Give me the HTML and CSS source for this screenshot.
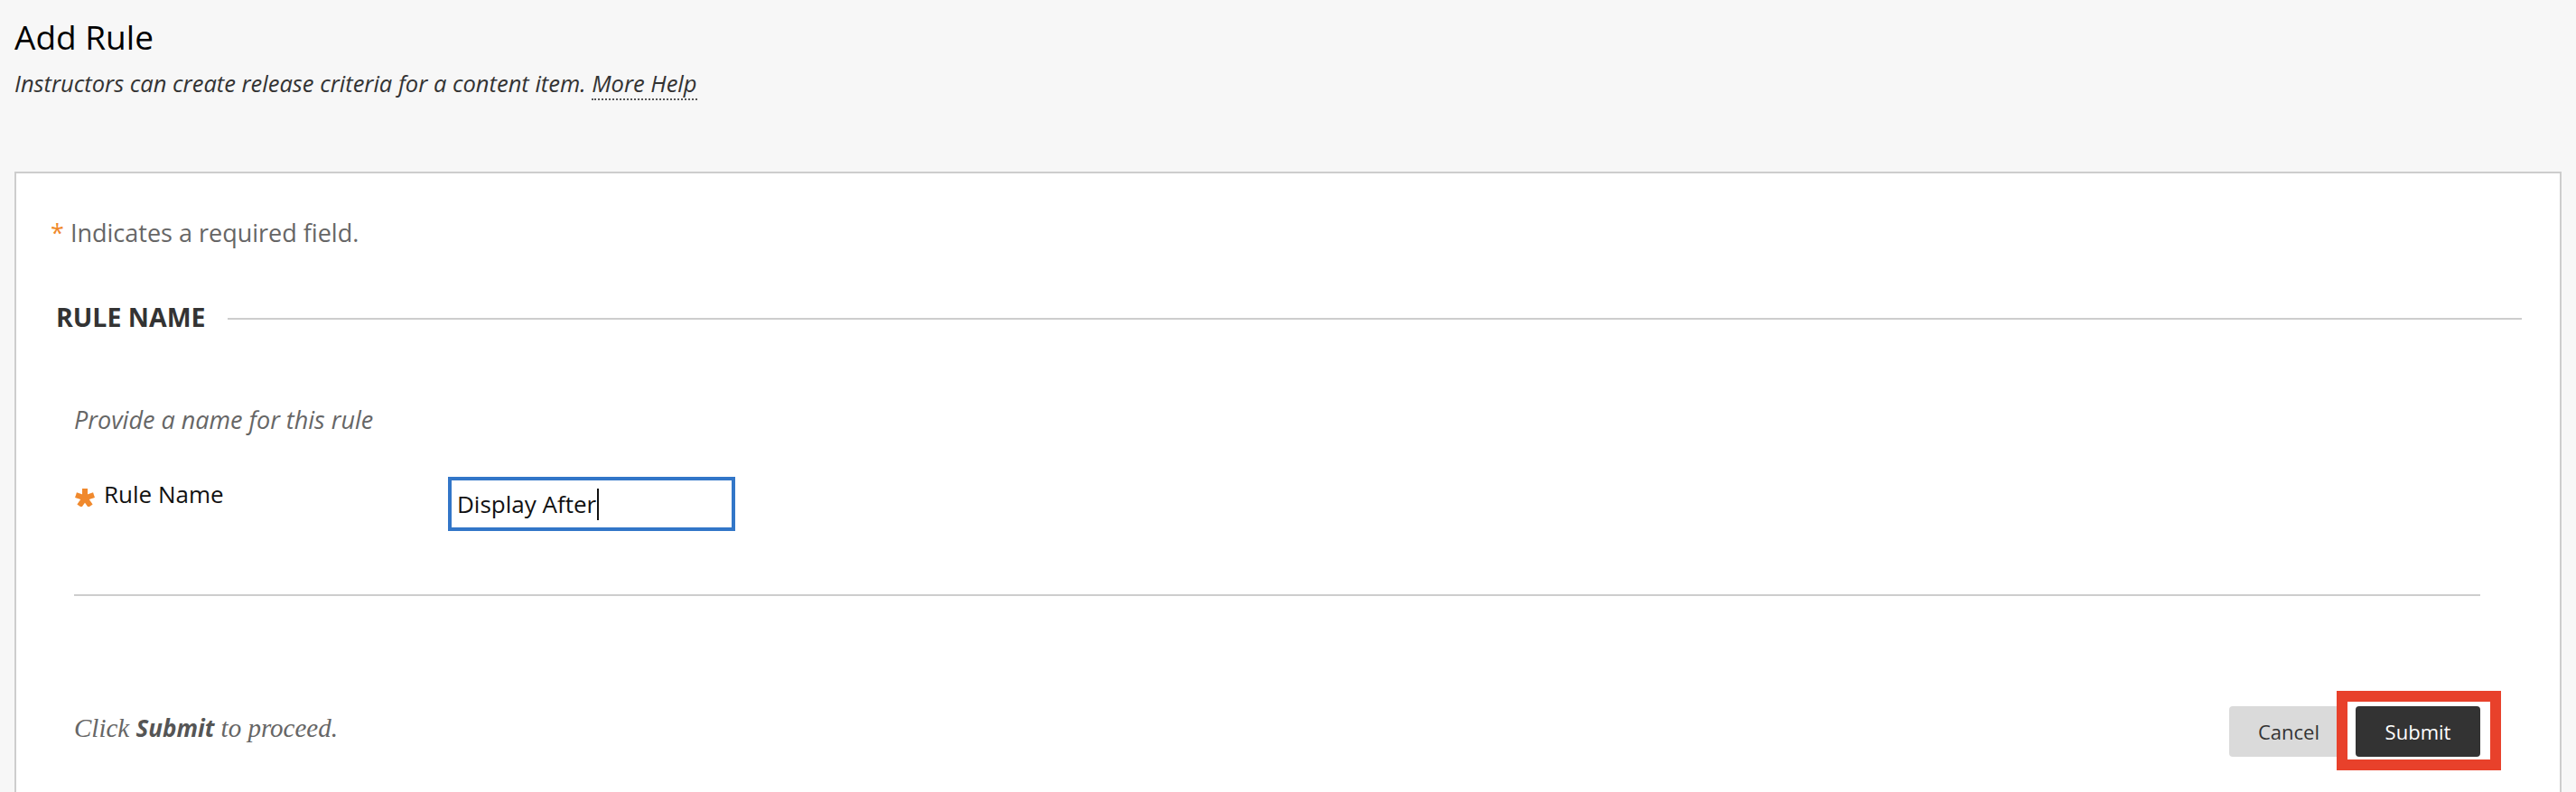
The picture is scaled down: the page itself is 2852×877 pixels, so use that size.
FILE: index.html
```html
<!DOCTYPE html>
<html lang="en">
<head>
<meta charset="utf-8">
<title>Add Rule</title>
<link rel="stylesheet" href="styles.css">
</head>
<body>
<div class="page">
  <header class="page-header">
    <h1 class="title">Add Rule</h1>
    <p class="subtitle">Instructors can create release criteria for a content item. <a class="help" href="#">More Help</a></p>
  </header>

  <div class="card">
    <p class="required"><span class="req-star">*</span> Indicates a required field.</p>

    <section class="step">
      <div class="step-head">
        <h2 class="step-title">RULE NAME</h2>
        <span class="step-line"></span>
      </div>
      <div class="step-body">
        <p class="instructions">Provide a name for this rule</p>
        <div class="field-row">
          <div class="label">
            <svg class="big-star" width="22" height="20" viewBox="0 0 22 20" aria-hidden="true">
              <g stroke="#f0892d" stroke-width="6" stroke-linecap="butt">
                <line x1="11" y1="10.5" x2="11" y2="0"/>
                <line x1="11" y1="10.5" x2="21" y2="7.2"/>
                <line x1="11" y1="10.5" x2="1" y2="7.2"/>
                <line x1="11" y1="10.5" x2="17.2" y2="19.2"/>
                <line x1="11" y1="10.5" x2="4.8" y2="19.2"/>
              </g>
            </svg>
            <span class="label-text">Rule Name</span>
          </div>
          <div class="text-input">Display After<span class="caret"></span></div>
        </div>
      </div>
    </section>

    <div class="submit-row">
      <p class="submit-hint">Click <strong>Submit</strong> to proceed.</p>
      <div class="buttons">
        <button class="btn btn-cancel" type="button">Cancel</button>
        <span class="submit-wrap">
          <button class="btn btn-submit" type="button">Submit</button>
          <span class="highlight"></span>
        </span>
      </div>
    </div>
  </div>
</div>
</body>
</html>
```

FILE: styles.css
```css
* { box-sizing: border-box; }

html, body {
  margin: 0;
  padding: 0;
  background: #f7f7f7;
  font-family: "Open Sans", "Noto Sans", sans-serif;
  overflow: hidden;
}

.page {
  padding: 15px 16px 0 16px;
}

.page-header {
  padding-bottom: 81px;
}

.title {
  margin: 0;
  font-size: 37px;
  font-weight: 400;
  line-height: normal;
  color: #000;
}

.subtitle {
  margin: 9px 0 0 0;
  font-size: 25.5px;
  font-style: italic;
  line-height: normal;
  color: #333;
}

.help {
  color: #333;
  text-decoration: none;
  border-bottom: 2px dotted #555;
}

.card {
  background: #fff;
  border: 2px solid #cdcdcd;
  padding: 47px 42px 200px 38px;
}

.required {
  margin: 0;
  font-size: 27px;
  line-height: normal;
  color: #666;
}

.req-star {
  color: #f0892d;
}

.step {
  margin-top: 56px;
}

.step-head {
  display: flex;
  align-items: center;
  gap: 24px;
  padding-left: 6px;
}

.step-title {
  margin: 0;
  font-size: 28.5px;
  font-weight: 700;
  line-height: normal;
  color: #333;
}

.step-line {
  flex: 1;
  height: 2px;
  margin-top: 4px;
  background: #cdcdcd;
}

.step-body {
  margin: 76px 46px 0 26px;
  padding-bottom: 70px;
  border-bottom: 2px solid #cdcdcd;
}

.instructions {
  margin: 0;
  font-size: 27px;
  font-style: italic;
  line-height: normal;
  color: #666;
}

.field-row {
  display: flex;
  align-items: flex-start;
  margin-top: 45px;
}

.label {
  width: 414px;
  margin-top: 1px;
  display: flex;
  align-items: flex-start;
}

.big-star {
  flex: none;
  margin: 12px 10px 0 1px;
}

.label-text {
  font-size: 26px;
  line-height: normal;
  color: #111;
}

.text-input {
  width: 318px;
  height: 60px;
  border: 4px solid #3276c8;
  padding: 0 6px;
  font-size: 26px;
  line-height: 52px;
  color: #111;
  display: flex;
  align-items: center;
}

.caret {
  display: inline-block;
  width: 2px;
  height: 35px;
  margin-left: 1px;
  background: #111;
}

.submit-row {
  display: flex;
  align-items: center;
  justify-content: space-between;
  margin: 122px 46px 0 26px;
}

.submit-hint {
  margin: 0 0 8px 0;
  font-family: "Liberation Serif", "DejaVu Serif", serif;
  font-style: italic;
  font-size: 29px;
  line-height: normal;
  color: #666;
}

.submit-hint strong {
  font-family: "Open Sans", sans-serif;
  font-weight: 700;
  font-style: italic;
  font-size: 26px;
  color: #555;
}

.buttons {
  display: flex;
  align-items: center;
  gap: 10px;
}

.btn {
  height: 56px;
  padding: 0 32px;
  border: 0;
  border-radius: 4px;
  font-family: "Open Sans", sans-serif;
  font-size: 22px;
}

.btn-cancel {
  width: 130px;
  background: #dadada;
  color: #333;
}

.btn-submit {
  width: 138px;
  background: #333;
  color: #fff;
}

.submit-wrap {
  position: relative;
  display: block;
}

.submit-wrap .btn {
  display: block;
}

.highlight {
  position: absolute;
  top: -17px;
  left: -21px;
  right: -23px;
  bottom: -15px;
  border: 12px solid #e8412b;
  pointer-events: none;
}
```
